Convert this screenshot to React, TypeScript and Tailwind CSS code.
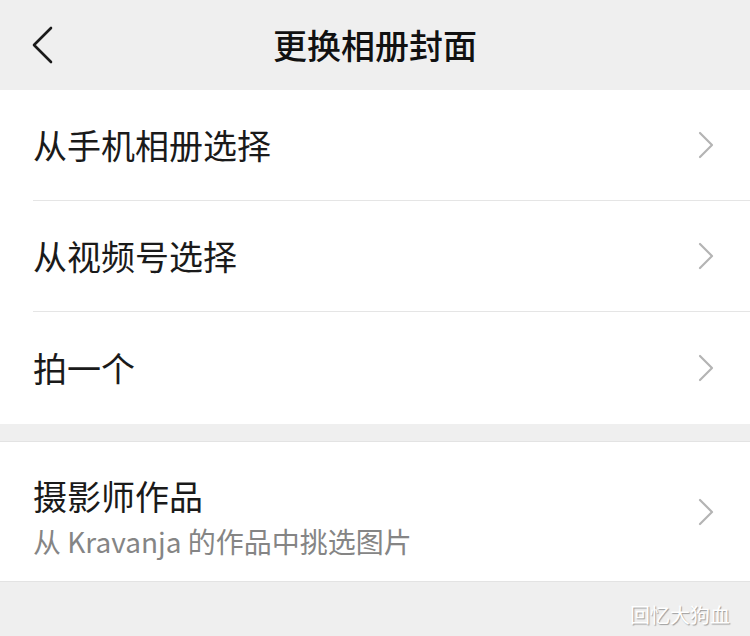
const font = { fontFamily: '"Noto Sans CJK SC", "Noto Sans", sans-serif' };

function Chevron() {
  return (
    <svg width="16" height="28" viewBox="0 0 16 28" className="shrink-0">
      <polyline
        points="2,2 14,14 2,26"
        fill="none"
        stroke="#b4b4b4"
        strokeWidth="2.2"
        strokeLinecap="round"
        strokeLinejoin="round"
      />
    </svg>
  );
}

function Row({ label, last }: { label: string; last?: boolean }) {
  return (
    <div className="pl-[33px]">
      <div
        className={
          "flex items-center justify-between pr-[36px] " +
          (last ? "h-[112px]" : "h-[111px] border-b border-[#e5e5e5]")
        }
      >
        <span className="text-[34px] leading-none text-[#1a1a1a]">{label}</span>
        <Chevron />
      </div>
    </div>
  );
}

export default function App() {
  return (
    <div style={font} className="relative flex h-[636px] w-[750px] flex-col overflow-hidden bg-[#efefef]">
      <header className="relative flex h-[90px] shrink-0 items-center justify-center">
        <svg width="24" height="38" viewBox="0 0 24 38" className="absolute left-[31px] top-[26px]">
          <polyline
            points="20,2 3,19 20,36"
            fill="none"
            stroke="#1a1a1a"
            strokeWidth="2.6"
            strokeLinecap="round"
            strokeLinejoin="round"
          />
        </svg>
        <h1 className="text-[34px] font-medium leading-none text-[#111]">更换相册封面</h1>
      </header>

      <section className="bg-white">
        <Row label="从手机相册选择" />
        <Row label="从视频号选择" />
        <Row label="拍一个" last />
      </section>

      <div className="h-[18px] shrink-0 border-b border-[#e3e3e3]" />

      <section className="flex h-[139px] items-center justify-between bg-white pl-[33px] pr-[36px]">
        <div className="flex flex-col gap-[14px] pt-[10px]">
          <span className="text-[34px] leading-none text-[#1a1a1a]">摄影师作品</span>
          <span className="text-[28px] leading-none text-[#858585]">从 Kravanja 的作品中挑选图片</span>
        </div>
        <Chevron />
      </section>

      <div className="flex-1 border-t border-[#e3e3e3]" />

      <span className="absolute bottom-[11px] right-[20px] text-[20px] leading-none text-white [text-shadow:1px_1px_1px_rgba(0,0,0,0.35)]">
        回忆大狗血
      </span>
    </div>
  );
}
